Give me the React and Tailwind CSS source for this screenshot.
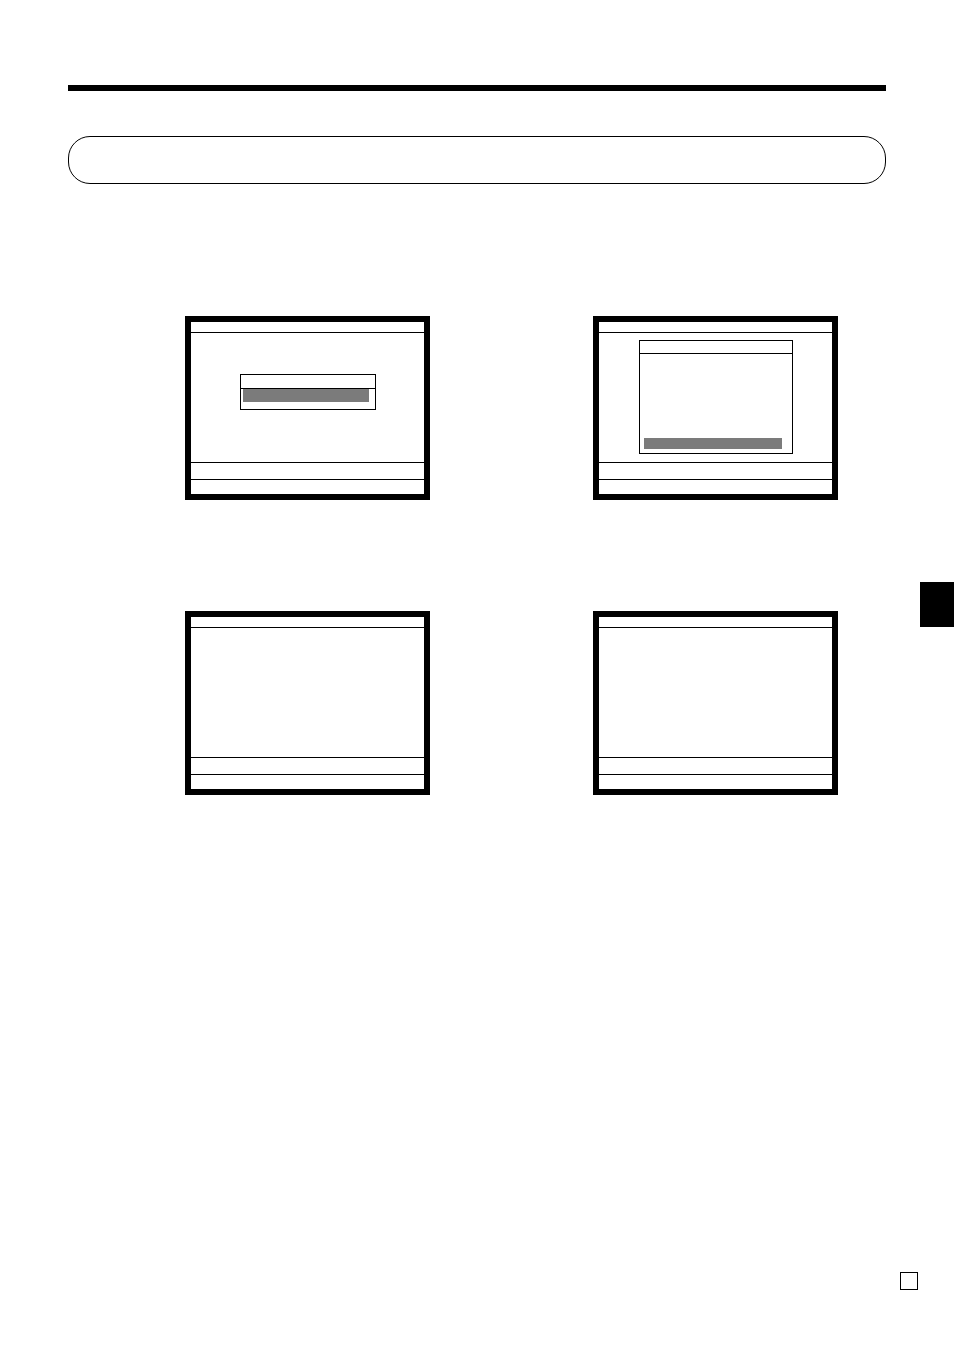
export default function App() {
  const Screen = ({ children }) => (
    <div className="w-[245px] h-[184px] border-[6px] border-black bg-white flex flex-col">
      <div className="h-[10.5px] border-b-[1.5px] border-black shrink-0" />
      <div className="flex-1 border-b-[1.5px] border-black">{children}</div>
      <div className="h-[16.5px] border-b-[1.5px] border-black shrink-0" />
      <div className="h-[14.5px] shrink-0" />
    </div>
  );

  return (
    <div className="relative w-[954px] h-[1350px] bg-white font-['Liberation_Sans',sans-serif] overflow-hidden">
      <div className="pt-[85px] px-[68px]">
        <div className="h-[6px] bg-black" />
        <div className="mt-[45px] h-[48px] border border-black rounded-[22px]" />
      </div>

      <div className="mt-[132px] pl-[185px] flex flex-col gap-[111px]">
        <div className="flex gap-[163px]">
          <Screen>
            <div className="ml-[49px] mt-[41px] w-[136px] h-[36.5px] border-[1.5px] border-black flex flex-col">
              <div className="h-[14.5px] border-b-[1.5px] border-black" />
              <div className="ml-[1.5px] w-[126px] h-[13px] bg-[#7b7b7b]" />
            </div>
          </Screen>
          <Screen>
            <div className="ml-[40px] mt-[7.5px] w-[154px] h-[114px] border-[1.5px] border-black flex flex-col">
              <div className="h-[12.5px] border-b-[1.5px] border-black" />
              <div className="flex-1" />
              <div className="ml-[4px] mb-[4px] w-[138px] h-[11px] bg-[#7b7b7b]" />
            </div>
          </Screen>
        </div>
        <div className="flex gap-[163px]">
          <Screen />
          <Screen />
        </div>
      </div>

      <div className="mt-[477px] ml-[900px] w-[18px] h-[18px] border-[1.5px] border-black" />

      <div className="absolute left-[920px] top-[582px] w-[34px] h-[45px] bg-black" />
    </div>
  );
}
